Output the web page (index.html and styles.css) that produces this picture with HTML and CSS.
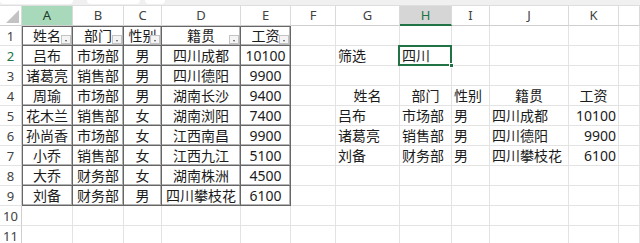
FILE: index.html
```html
<html>

<head>
    <meta charset="utf-8">
    <link rel="stylesheet" href="styles.css">
</head>

<body>
    <div class="topbar">
        <div class="box name-box"></div>
        <div class="box fx-box"></div>
        <div class="box formula-box"></div>
    </div>

    <div class="sheet">
        <!-- column headers -->
        <div class="hd corner"></div>
        <div class="hd col hl">A</div>
        <div class="hd col">B</div>
        <div class="hd col">C</div>
        <div class="hd col">D</div>
        <div class="hd col">E</div>
        <div class="hd col">F</div>
        <div class="hd col">G</div>
        <div class="hd col act">H</div>
        <div class="hd col">I</div>
        <div class="hd col">J</div>
        <div class="hd col">K</div>
        <div class="hd col"></div>

        <!-- row 1 -->
        <div class="hd row">1</div>
        <div class="c t tl tt ctr">姓名<span class="filter"></span></div>
        <div class="c t tt ctr">部门<span class="filter"></span></div>
        <div class="c t tt ctr">性别<span class="filter"></span></div>
        <div class="c t tt ctr">籍贯<span class="filter"></span></div>
        <div class="c t tt ctr">工资<span class="filter"></span></div>
        <div class="c"></div>
        <div class="c"></div>
        <div class="c"></div>
        <div class="c"></div>
        <div class="c"></div>
        <div class="c"></div>
        <div class="c"></div>

        <!-- row 2 -->
        <div class="hd row act-row">2</div>
        <div class="c t tl ctr">吕布</div>
        <div class="c t ctr">市场部</div>
        <div class="c t ctr">男</div>
        <div class="c t ctr">四川成都</div>
        <div class="c t ctr">10100</div>
        <div class="c"></div>
        <div class="c">筛选</div>
        <div class="c selected">四川</div>
        <div class="c"></div>
        <div class="c"></div>
        <div class="c"></div>
        <div class="c"></div>

        <!-- row 3 -->
        <div class="hd row">3</div>
        <div class="c t tl ctr">诸葛亮</div>
        <div class="c t ctr">销售部</div>
        <div class="c t ctr">男</div>
        <div class="c t ctr">四川德阳</div>
        <div class="c t ctr">9900</div>
        <div class="c"></div>
        <div class="c"></div>
        <div class="c"></div>
        <div class="c"></div>
        <div class="c"></div>
        <div class="c"></div>
        <div class="c"></div>

        <!-- row 4 -->
        <div class="hd row">4</div>
        <div class="c t tl ctr">周瑜</div>
        <div class="c t ctr">市场部</div>
        <div class="c t ctr">男</div>
        <div class="c t ctr">湖南长沙</div>
        <div class="c t ctr">9400</div>
        <div class="c"></div>
        <div class="c ctr">姓名</div>
        <div class="c ctr">部门</div>
        <div class="c">性别</div>
        <div class="c ctr">籍贯</div>
        <div class="c ctr">工资</div>
        <div class="c"></div>

        <!-- row 5 -->
        <div class="hd row">5</div>
        <div class="c t tl ctr">花木兰</div>
        <div class="c t ctr">销售部</div>
        <div class="c t ctr">女</div>
        <div class="c t ctr">湖南浏阳</div>
        <div class="c t ctr">7400</div>
        <div class="c"></div>
        <div class="c">吕布</div>
        <div class="c">市场部</div>
        <div class="c">男</div>
        <div class="c">四川成都</div>
        <div class="c rt">10100</div>
        <div class="c"></div>

        <!-- row 6 -->
        <div class="hd row">6</div>
        <div class="c t tl ctr">孙尚香</div>
        <div class="c t ctr">市场部</div>
        <div class="c t ctr">女</div>
        <div class="c t ctr">江西南昌</div>
        <div class="c t ctr">9900</div>
        <div class="c"></div>
        <div class="c">诸葛亮</div>
        <div class="c">销售部</div>
        <div class="c">男</div>
        <div class="c">四川德阳</div>
        <div class="c rt">9900</div>
        <div class="c"></div>

        <!-- row 7 -->
        <div class="hd row">7</div>
        <div class="c t tl ctr">小乔</div>
        <div class="c t ctr">销售部</div>
        <div class="c t ctr">女</div>
        <div class="c t ctr">江西九江</div>
        <div class="c t ctr">5100</div>
        <div class="c"></div>
        <div class="c">刘备</div>
        <div class="c">财务部</div>
        <div class="c">男</div>
        <div class="c">四川攀枝花</div>
        <div class="c rt">6100</div>
        <div class="c"></div>

        <!-- row 8 -->
        <div class="hd row">8</div>
        <div class="c t tl ctr">大乔</div>
        <div class="c t ctr">财务部</div>
        <div class="c t ctr">女</div>
        <div class="c t ctr">湖南株洲</div>
        <div class="c t ctr">4500</div>
        <div class="c"></div>
        <div class="c"></div>
        <div class="c"></div>
        <div class="c"></div>
        <div class="c"></div>
        <div class="c"></div>
        <div class="c"></div>

        <!-- row 9 -->
        <div class="hd row">9</div>
        <div class="c t tl ctr">刘备</div>
        <div class="c t ctr">财务部</div>
        <div class="c t ctr">男</div>
        <div class="c t ctr">四川攀枝花</div>
        <div class="c t ctr">6100</div>
        <div class="c"></div>
        <div class="c"></div>
        <div class="c"></div>
        <div class="c"></div>
        <div class="c"></div>
        <div class="c"></div>
        <div class="c"></div>

        <!-- row 10 -->
        <div class="hd row">10</div>
        <div class="c"></div>
        <div class="c"></div>
        <div class="c"></div>
        <div class="c"></div>
        <div class="c"></div>
        <div class="c"></div>
        <div class="c"></div>
        <div class="c"></div>
        <div class="c"></div>
        <div class="c"></div>
        <div class="c"></div>
        <div class="c"></div>

        <!-- row 11 -->
        <div class="hd row">11</div>
        <div class="c"></div>
        <div class="c"></div>
        <div class="c"></div>
        <div class="c"></div>
        <div class="c"></div>
        <div class="c"></div>
        <div class="c"></div>
        <div class="c"></div>
        <div class="c"></div>
        <div class="c"></div>
        <div class="c"></div>
        <div class="c"></div>
    </div>
</body>

</html>
```

FILE: styles.css
```css
body {
    margin: 0;
    background: #ffffff;
    font-family: "Noto Sans", "Noto Sans CJK SC", sans-serif;
    color: #1b1b1b;
    overflow: hidden;
}

.topbar {
    display: flex;
    height: 5px;
    background: #f0f0f0;
    border-bottom: 1px solid #dedede;
}

.box {
    height: 4px;
    background: #ffffff;
    border-radius: 0 0 4px 4px;
}

.name-box {
    width: 73px;
}

.fx-box {
    width: 53px;
    margin-left: 14px;
}

.formula-box {
    width: 20px;
    margin-left: 5px;
}

.sheet {
    display: grid;
    grid-template-columns: 22px 51px 51px 38px 79px 50px 45px 64px 52px 38px 79px 50px 1fr;
    grid-template-rows: 20px;
    grid-auto-rows: 20px;
}

/* headers */
.hd {
    box-sizing: border-box;
    background: #ffffff;
    color: #424242;
    font-size: 13px;
    text-align: center;
    line-height: 19px;
    border-right: 1px solid #dadada;
    border-bottom: 1px solid #cfcfcf;
}

.corner {
    position: relative;
}

.corner::after {
    content: "";
    position: absolute;
    right: 2px;
    bottom: 2px;
    width: 0;
    height: 0;
    border-left: 13px solid transparent;
    border-bottom: 13px solid #c3c3c3;
}

.hl {
    background: #a9d9bb;
    color: #1d3b2a;
}

.act {
    background: #d6d6d6;
    color: #217346;
    border-bottom: 2px solid #217346;
}

.row {
    border-bottom: 1px solid #e3e3e3;
    border-right: 1px solid #cfcfcf;
    line-height: 20px;
}

.act-row {
    color: #217346;
}

/* cells */
.c {
    position: relative;
    box-sizing: border-box;
    padding: 0 2px;
    font-size: 14px;
    line-height: 19px;
    white-space: nowrap;
    overflow: hidden;
    border-right: 1px solid #e3e3e3;
    border-bottom: 1px solid #e3e3e3;
}

.ctr {
    text-align: center;
}

.rt {
    text-align: right;
}

/* data table with thin dark borders */
.t {
    border-right-color: #666666;
    border-bottom-color: #666666;
    box-shadow: inset -1px -1px #b4b4b4;
}

.tl {
    box-shadow: inset 1px 0 #666666, inset -1px -1px #b4b4b4;
}

.tt {
    box-shadow: inset 0 1px #666666, inset -1px -1px #b4b4b4;
}

.tl.tt {
    box-shadow: inset 1px 0 #666666, inset 0 1px #666666, inset -1px -1px #b4b4b4;
}

.filter {
    position: absolute;
    right: 1px;
    bottom: 1px;
    width: 10px;
    height: 9px;
    box-sizing: border-box;
    background: #f4f4f4;
    border: 1px solid #c4c4c4;
}

.filter::after {
    content: "";
    position: absolute;
    left: 3px;
    top: 4px;
    border-left: 1.5px solid transparent;
    border-right: 1.5px solid transparent;
    border-top: 2px solid #555555;
}

.selected {
    overflow: visible;
}

.selected::after {
    content: "";
    position: absolute;
    left: -2px;
    top: -1px;
    right: -1px;
    bottom: -1px;
    border: 2px solid #217346;
}

.selected::before {
    content: "";
    position: absolute;
    right: -3px;
    bottom: -3px;
    width: 5px;
    height: 5px;
    background: #217346;
    border: 1px solid #ffffff;
    z-index: 2;
    box-sizing: border-box;
}
```
